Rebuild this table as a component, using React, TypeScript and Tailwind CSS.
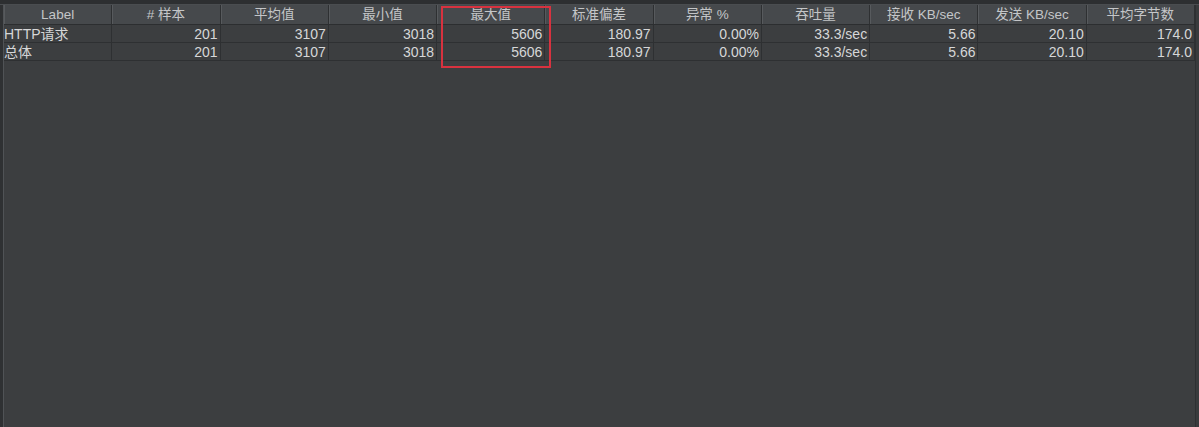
const columns = [
  "Label",
  "# 样本",
  "平均值",
  "最小值",
  "最大值",
  "标准偏差",
  "异常 %",
  "吞吐量",
  "接收 KB/sec",
  "发送 KB/sec",
  "平均字节数",
];

const rows = [
  ["HTTP请求", "201", "3107", "3018", "5606", "180.97", "0.00%", "33.3/sec", "5.66", "20.10", "174.0"],
  ["总体", "201", "3107", "3018", "5606", "180.97", "0.00%", "33.3/sec", "5.66", "20.10", "174.0"],
];

const font = { fontFamily: '"Liberation Sans", "Noto Sans CJK SC", sans-serif' };

export default function App() {
  return (
    <div
      className="w-[1199px] h-[427px] bg-[#3c3e40] flex flex-col overflow-hidden leading-none"
      style={font}
    >
      {/* top strip */}
      <div className="h-[5px] bg-[#2d2f31] border-b border-[#4a4d50] shrink-0" />
      <div className="flex flex-1">
        <div className="w-[4px] bg-[#2f3133] border-r border-[#505356] shrink-0" />
        <div className="relative flex-1 flex flex-col">
          <div className="grid grid-cols-11 h-[20px] bg-[#46494c] border-b border-[#2c2e30] text-[13.5px]">
            {columns.map((c) => (
              <div
                key={c}
                className="flex items-center justify-center pt-[1px] text-[#c4c6c8] border-r border-[#2e3032] shadow-[inset_1px_0_0_#575a5d]"
              >
                {c}
              </div>
            ))}
          </div>
          {rows.map((r, i) => (
            <div key={i} className="grid grid-cols-11 h-[18px] border-b border-[#2e3032] text-[14px]">
              {r.map((v, j) => (
                <div
                  key={j}
                  className={`flex items-center pt-[1px] text-[#d6d7d8] border-r border-[#2e3032] ${
                    j === 0 ? "justify-start" : "justify-end pr-[2px]"
                  }`}
                >
                  {v}
                </div>
              ))}
            </div>
          ))}
          <div className="flex-1" />
          {/* highlight box around 最大值 */}
          <div className="absolute z-10 left-[437px] top-[1px] w-[110px] h-[62px] border-2 border-[#d8323f]" />
        </div>
        <div className="w-[4px] bg-[#393b3d] border-l border-[#2e3032] shrink-0" />
      </div>
    </div>
  );
}
